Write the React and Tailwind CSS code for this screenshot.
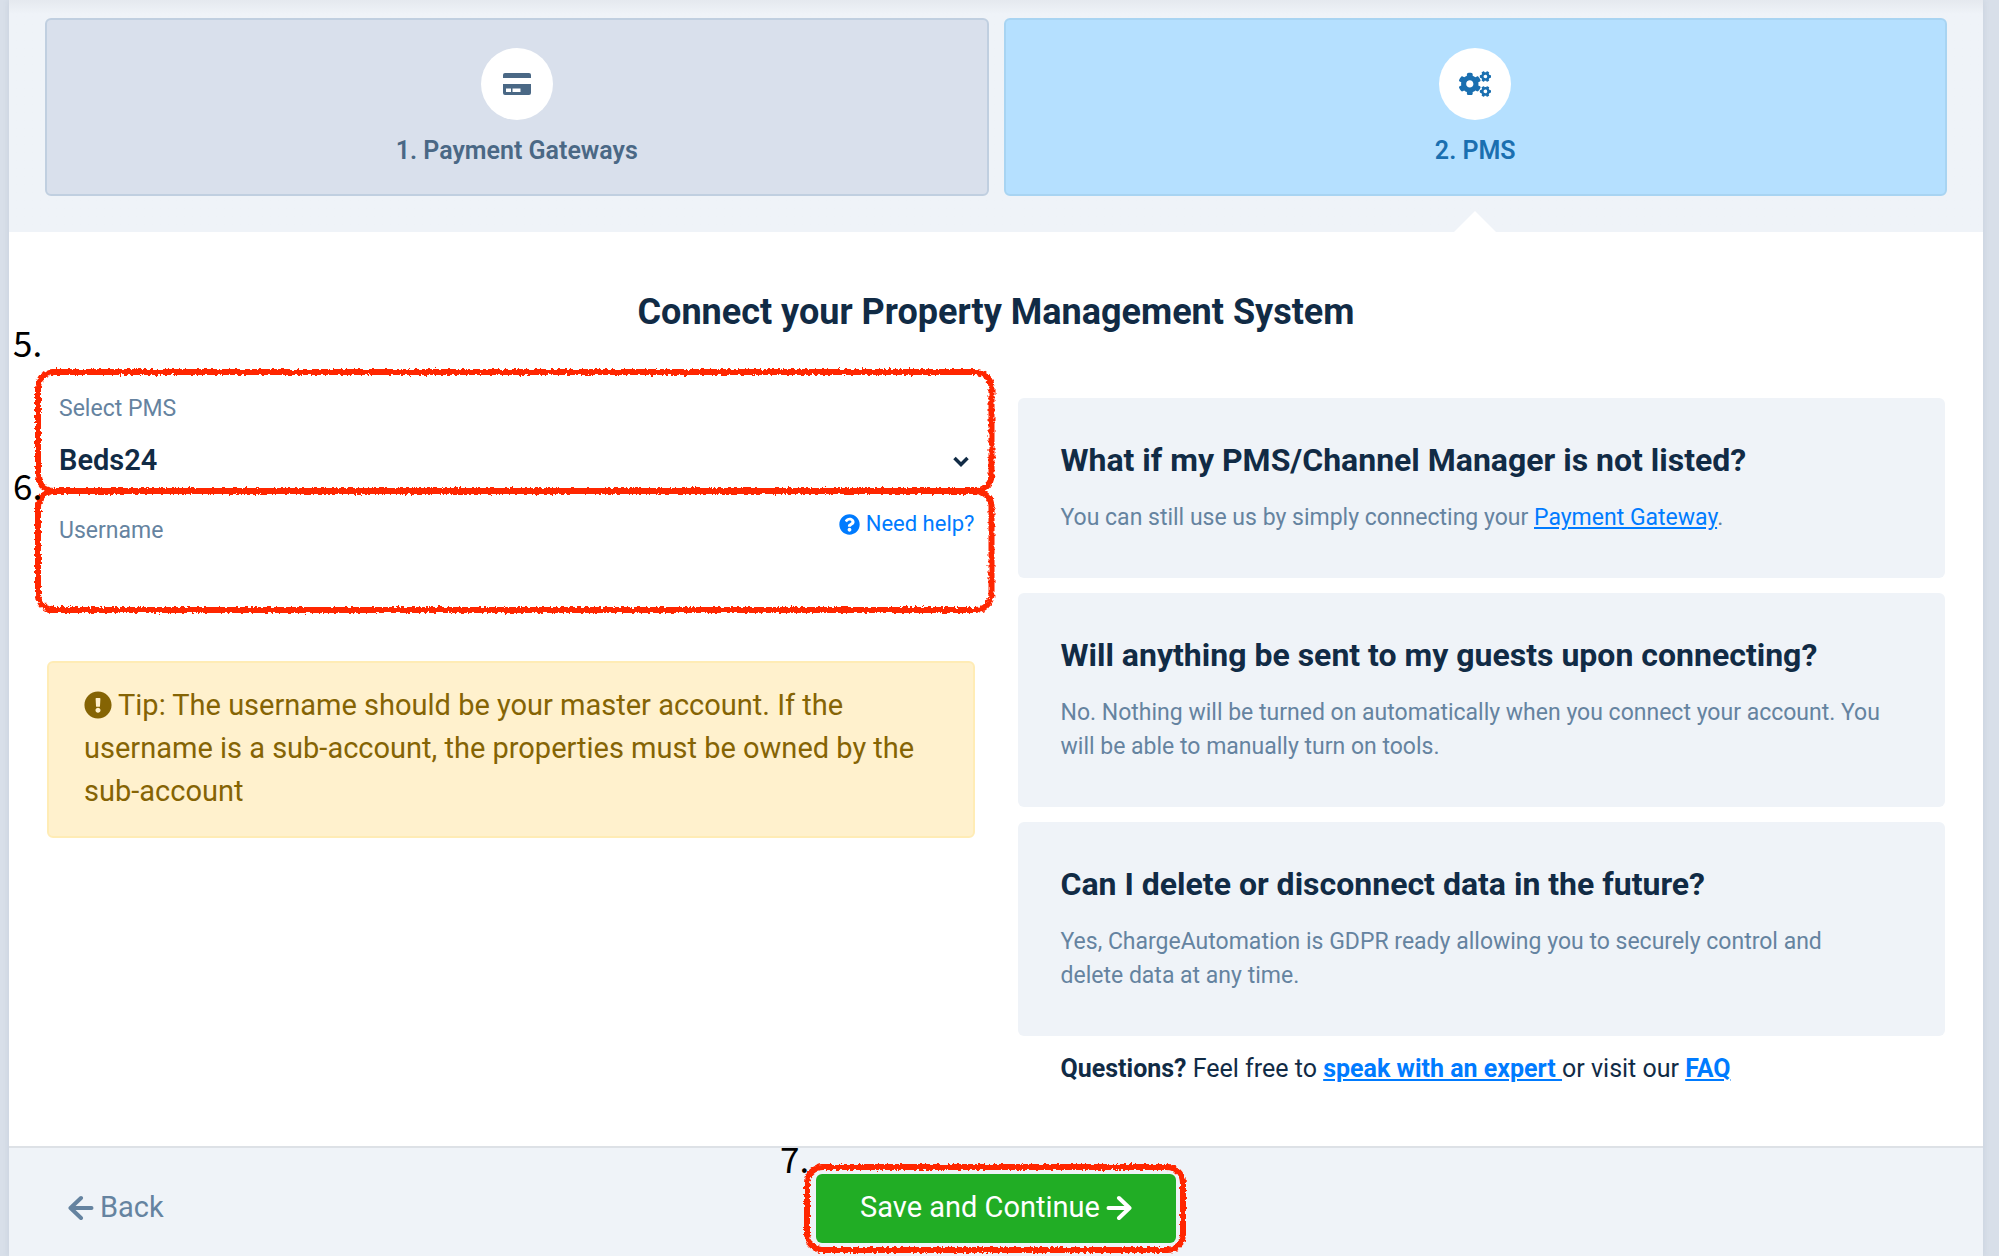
import { useState } from "react";
import { FaCogs, FaQuestionCircle, FaExclamationCircle } from "react-icons/fa";

const faqs = [
  {
    title: "What if my PMS/Channel Manager is not listed?",
    body: (
      <>
        You can still use us by simply connecting your{" "}
        <a href="#gateway" className="text-[#007bff] underline">Payment Gateway</a>.
      </>
    ),
  },
  {
    title: "Will anything be sent to my guests upon connecting?",
    body: "No. Nothing will be turned on automatically when you connect your account. You will be able to manually turn on tools.",
  },
  {
    title: "Can I delete or disconnect data in the future?",
    body: "Yes, ChargeAutomation is GDPR ready allowing you to securely control and delete data at any time.",
  },
];

function CardIcon() {
  return (
    <svg viewBox="0 0 28 22" className="w-7" fill="currentColor" aria-hidden="true">
      <path d="M2 0h24a2 2 0 0 1 2 2v3H0V2a2 2 0 0 1 2-2z" />
      <path
        fillRule="evenodd"
        d="M0 11h28v9a2 2 0 0 1-2 2H2a2 2 0 0 1-2-2zM3 15.500v3.500h5v-3.500zM9.500 15.500v3.500h8v-3.500z"
      />
    </svg>
  );
}

function Arrow({ className }) {
  return (
    <svg
      viewBox="0 0 26 26"
      className={className}
      fill="none"
      stroke="currentColor"
      strokeWidth="4"
      strokeLinecap="round"
      strokeLinejoin="round"
      aria-hidden="true"
    >
      <path d="M2.500 13H23M13 3l10.500 10L13 23" />
    </svg>
  );
}

// Crayon style outline laid over the element it marks
function Marker({ className, number, numberClass }) {
  return (
    <div className={`pointer-events-none absolute ${className}`}>
      <svg className="block h-full w-full overflow-visible" aria-hidden="true">
        <filter id={`crayon-${number}`} x="-10" y="-10" width="1100" height="200" filterUnits="userSpaceOnUse">
          <feTurbulence type="fractalNoise" baseFrequency="0.3" numOctaves="3" seed={number} result="noise" />
          <feDisplacementMap in="SourceGraphic" in2="noise" scale="5" xChannelSelector="R" yChannelSelector="G" />
        </filter>
        <rect
          width="100%"
          height="100%"
          rx="16"
          fill="none"
          stroke="#ff2600"
          strokeWidth="6"
          filter={`url(#crayon-${number})`}
        />
      </svg>
      <span
        className={`absolute font-['Noto_Sans_CJK_SC',sans-serif] text-[35px] leading-[34px] text-black ${numberClass}`}
      >
        {number}.
      </span>
    </div>
  );
}

function Step({ icon, label, active }) {
  return (
    <button
      type="button"
      aria-current={active ? "step" : undefined}
      className={`relative flex flex-1 flex-col items-center rounded-md border-2 pt-7 pb-6 ${
        active
          ? "border-[#a8d4f2] bg-[#b5e0ff] text-[#1a6fb0]"
          : "border-[#c0cfe0] bg-[#d9e0ec] text-[#4a6885]"
      }`}
    >
      <span className="flex h-[72px] w-[72px] items-center justify-center rounded-full bg-white">{icon}</span>
      <span className="mt-3 text-[25px] leading-[38px] font-semibold">{label}</span>
      {active && (
        <svg viewBox="0 0 42 21" className="absolute top-[191px] w-[42px]" aria-hidden="true">
          <path d="M0 21L21 0l21 21z" fill="#fff" />
        </svg>
      )}
    </button>
  );
}

function App() {
  const [pms, setPms] = useState("Beds24");
  const [username, setUsername] = useState("");

  return (
    <div className="min-h-screen bg-[#d8dfe9] pr-4 pl-[9px] font-[Roboto,sans-serif]">
      <div className="flex min-h-screen flex-col bg-white shadow-[0_0_6px_rgba(100,120,150,0.15)]">
        <header className="bg-[#eff3f8] bg-linear-to-b from-[#e5e9ef] to-[#eff3f8] to-[14px] px-9 pt-[18px] pb-9">
          <nav className="flex gap-[15px]">
            <Step icon={<CardIcon />} label="1. Payment Gateways" />
            <Step icon={<FaCogs size={32} />} label="2. PMS" active />
          </nav>
        </header>

        <main className="flex-1 px-[38px] pt-[58px] pb-14">
          <h1 className="text-center text-[36px] leading-[44px] font-bold text-[#112b45]">
            Connect your Property Management System
          </h1>

          <div className="mt-[38px] grid grid-cols-2 gap-[43px]">
            <form onSubmit={(e) => e.preventDefault()}>
              <div className="relative h-[119px] px-3 pt-[19px]">
                <label htmlFor="pms" className="block text-[23px] leading-9 text-[#6583a0]">
                  Select PMS
                </label>
                <select
                  id="pms"
                  value={pms}
                  onChange={(e) => setPms(e.target.value)}
                  className="mt-[13px] block w-full appearance-none bg-transparent text-[29px] leading-10 font-semibold text-[#112b45] outline-none"
                >
                  <option>Beds24</option>
                </select>
                <svg viewBox="0 0 16 11" className="absolute right-1.5 bottom-6 w-4" aria-hidden="true">
                  <path d="M1.500 2L8 8.500 14.500 2" fill="none" stroke="#112b45" strokeWidth="3.500" />
                </svg>
                <Marker className="top-0 -right-[17px] bottom-0 -left-[9px]" number={5} numberClass="-top-[47px] -left-[25px]" />
              </div>

              <div className="relative h-[119px] px-3 pt-[22px]">
                <div className="flex items-start justify-between">
                  <label htmlFor="username" className="text-[23px] leading-9 text-[#6583a0]">
                    Username
                  </label>
                  <a href="#help" className="-mt-[7px] -mr-3 flex items-center gap-1.5 text-[22px] leading-9 text-[#007bff]">
                    <FaQuestionCircle size={21} /> Need help?
                  </a>
                </div>
                <input
                  id="username"
                  value={username}
                  onChange={(e) => setUsername(e.target.value)}
                  className="mt-2 block w-full bg-transparent text-[29px] leading-10 font-semibold text-[#112b45] outline-none"
                />
                <Marker className="top-0 -right-[17px] bottom-0 -left-[9px]" number={6} numberClass="-top-[23px] -left-[25px]" />
              </div>

              <p className="mt-[51px] rounded-md border-2 border-[#ffecb5] bg-[#fff1cd] px-[35px] pt-[21px] pb-[23px] text-[29px] leading-[43px] text-[#856404]">
                <FaExclamationCircle size={28} className="mr-1.5 mb-1 inline" />
                Tip: The username should be your master account. If the username is a sub-account, the
                properties must be owned by the sub-account
              </p>
            </form>

            <section className="flex flex-col gap-[15px] pt-[26px]">
              {faqs.map((faq) => (
                <article key={faq.title} className="rounded-md bg-[#eff3f8] py-[43px] pr-[60px] pl-[43px]">
                  <h2 className="text-[32px] leading-[38px] font-bold text-[#112b45]">{faq.title}</h2>
                  <p className="mt-[22px] text-[23px] leading-[34px] text-[#6583a0]">{faq.body}</p>
                </article>
              ))}
              <p className="px-[43px] text-[25px] leading-9 text-[#112b45]">
                <strong className="font-bold">Questions?</strong> Feel free to{" "}
                <a href="#expert" className="font-bold text-[#007bff] underline">speak with an expert </a>
                or visit our <a href="#faq" className="font-bold text-[#007bff] underline">FAQ</a>
              </p>
            </section>
          </div>
        </main>

        <footer className="grid grid-cols-[1fr_auto_1fr] items-center border-t-2 border-[#dde1e6] bg-[#eff3f8] px-[59px] pt-[26px] pb-[13px]">
          <button type="button" className="flex items-center gap-1.5 pb-0.5 text-[29px] leading-[43px] text-[#6583a0]">
            <Arrow className="w-[26px] rotate-180" /> Back
          </button>
          <div className="relative">
            <button
              type="button"
              className="flex h-[69px] w-[360px] items-center justify-center gap-1.5 rounded-md bg-[#21ad25] pb-0.5 text-[29px] text-white"
            >
              Save and Continue <Arrow className="w-[26px]" />
            </button>
            <Marker className="-top-[7px] -right-[7px] -bottom-[7px] -left-[9px]" number={7} numberClass="-top-[26px] -left-[27px]" />
          </div>
        </footer>
      </div>
    </div>
  );
}

export default App;
